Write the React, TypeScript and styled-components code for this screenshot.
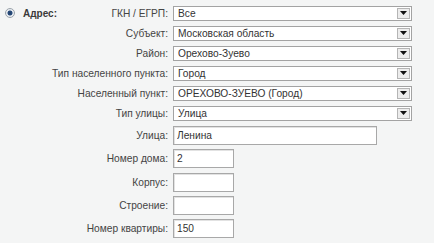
import React from 'react';
import styled, {createGlobalStyle} from 'styled-components';

const GlobalStyle = createGlobalStyle`
  html, body {
    margin: 0;
    padding: 0;
    background: #f4f5f5;
  }
  body {
    font-family: 'Liberation Sans', Arial, sans-serif;
    font-size: 10.2px;
    color: #3a3a3a;
  }
`

type Field =
    | {label: string; kind: 'select'; value: string}
    | {label: string; kind: 'input'; value: string; size: 'wide' | 'short'}

const fields: Field[] = [
    {label: 'ГКН / ЕГРП:', kind: 'select', value: 'Все'},
    {label: 'Субъект:', kind: 'select', value: 'Московская область'},
    {label: 'Район:', kind: 'select', value: 'Орехово-Зуево'},
    {label: 'Тип населенного пункта:', kind: 'select', value: 'Город'},
    {label: 'Населенный пункт:', kind: 'select', value: 'ОРЕХОВО-ЗУЕВО (Город)'},
    {label: 'Тип улицы:', kind: 'select', value: 'Улица'},
    {label: 'Улица:', kind: 'input', value: 'Ленина', size: 'wide'},
    {label: 'Номер дома:', kind: 'input', value: '2', size: 'short'},
    {label: 'Корпус:', kind: 'input', value: '', size: 'short'},
    {label: 'Строение:', kind: 'input', value: '', size: 'short'},
    {label: 'Номер квартиры:', kind: 'input', value: '150', size: 'short'},
]

export default function App() {
    return (
        <>
            <GlobalStyle/>
            <StyledForm>
                {fields.map((f, i) => (
                    <StyledRow key={f.label} $kind={f.kind}>
                        <StyledLabelCell>
                            {i === 0 && (
                                <StyledTitle>
                                    <StyledRadio/>
                                    Адрес:
                                </StyledTitle>
                            )}
                            <StyledLabel>{f.label}</StyledLabel>
                        </StyledLabelCell>
                        {f.kind === 'select' ? (
                            <StyledSelect>
                                <StyledSelectValue>{f.value}</StyledSelectValue>
                                <StyledArrow>
                                    <svg width="7" height="4" viewBox="0 0 7 4">
                                        <path d="M0 0h7L3.5 4z" fill="#111"/>
                                    </svg>
                                </StyledArrow>
                            </StyledSelect>
                        ) : (
                            <StyledInput $size={f.size} defaultValue={f.value}/>
                        )}
                    </StyledRow>
                ))}
            </StyledForm>
        </>
    );
}

const StyledForm = styled.div`
  width: 434px;
  height: 243px;
  box-sizing: border-box;
  padding-top: 3px;
  overflow: hidden;
`

const StyledRow = styled.div<{$kind: 'select' | 'input'}>`
  display: grid;
  grid-template-columns: 168px auto;
  column-gap: 5px;
  align-items: center;
  justify-content: start;
  height: ${p => p.$kind === 'select' ? '20px' : '23.3px'};
  &:nth-child(7) {
    margin-top: 1px;
  }
`

const StyledLabelCell = styled.div`
  display: flex;
  align-items: center;
  justify-content: space-between;
  white-space: nowrap;
`

const StyledTitle = styled.div`
  display: flex;
  align-items: center;
  gap: 8px;
  padding-left: 5px;
  font-weight: bold;
  font-size: 10px;
  color: #3a3a3a;
`

const StyledRadio = styled.span`
  width: 10px;
  height: 10px;
  box-sizing: border-box;
  border-radius: 50%;
  border: 1px solid #9aa3ab;
  background: radial-gradient(circle, #1e3c66 0, #2a4e7e 2.2px, #dfe4ea 2.8px, #f6f7f9 5px);
`

const StyledLabel = styled.span`
  margin-left: auto;
  text-align: right;
  color: #444;
`

const StyledSelect = styled.div`
  display: flex;
  align-items: center;
  width: 239px;
  height: 15px;
  box-sizing: border-box;
  border: 1px solid #a3a3a3;
  background: #fff;
`

const StyledSelectValue = styled.span`
  flex: 1;
  padding-left: 4px;
  color: #333;
  line-height: 13px;
  white-space: nowrap;
  overflow: hidden;
`

const StyledArrow = styled.span`
  display: flex;
  align-items: center;
  justify-content: center;
  width: 13px;
  height: 11px;
  margin-right: 1px;
  box-sizing: border-box;
  border: 1px solid #b5b5b5;
  background: #ececec;
`

const StyledInput = styled.input<{$size: 'wide' | 'short'}>`
  width: ${p => p.$size === 'wide' ? '204px' : '61px'};
  height: 19px;
  box-sizing: border-box;
  padding: 0 3px;
  border: 1px solid #a8a8a8;
  box-shadow: inset 1px 1px 0 #e2e2e2;
  background: #fff;
  font-family: 'Liberation Sans', Arial, sans-serif;
  font-size: 10.2px;
  color: #333;
  outline: none;
`
